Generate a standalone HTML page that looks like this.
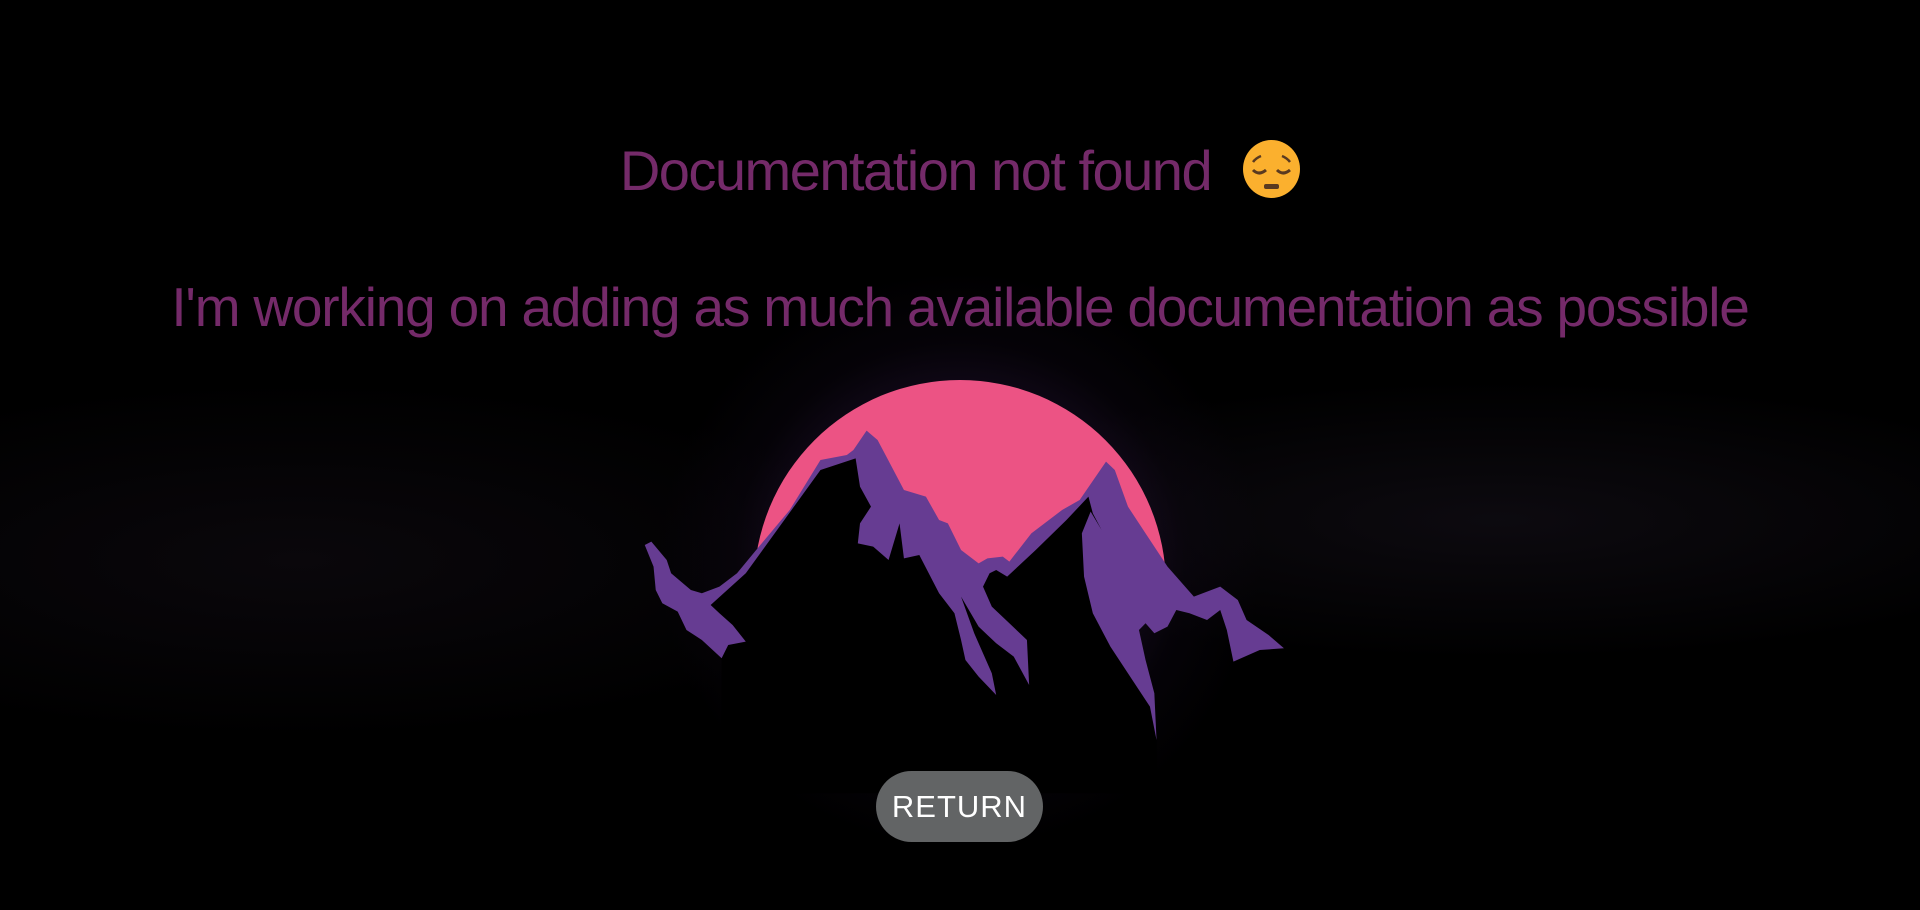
<!DOCTYPE html>
<html><head><meta charset="utf-8"><style>
html,body{margin:0;padding:0;width:1920px;height:910px;overflow:hidden;background:#000;}
body{position:relative;font-family:"Liberation Sans",sans-serif;}
.bg{position:absolute;inset:0;background:
radial-gradient(ellipse 300px 290px at 960px 560px, rgba(75,40,105,.75) 0%, rgba(45,22,65,.55) 45%, rgba(20,10,30,.25) 75%, rgba(0,0,0,0) 100%),
radial-gradient(ellipse 600px 140px at 1500px 520px, rgba(18,14,22,.7), rgba(0,0,0,0) 100%),
radial-gradient(ellipse 600px 180px at 300px 560px, rgba(14,10,16,.7), rgba(0,0,0,0) 100%);}
.t{position:absolute;left:0;width:1920px;text-align:center;color:#742a69;font-weight:300;white-space:nowrap;}
#h1{top:138px;font-size:56px;letter-spacing:-1.5px;}
#h2{top:275px;font-size:55px;letter-spacing:-1.2px;}
.emo{display:inline-block;width:57px;height:58px;border-radius:50%;background:#fbb02e;vertical-align:-8px;margin-left:18px;position:relative;}
.btn{position:absolute;left:876px;top:771px;width:167px;height:71px;border-radius:36px;background:#626465;color:#fff;font-size:31px;text-align:center;line-height:71px;letter-spacing:1px;}
</style></head><body>
<div class="bg"></div>
<div class="t" id="h1">Documentation not found <span class="emo"><svg width="57" height="58" viewBox="0 0 57 58" style="position:absolute;left:0;top:0"><path d="M10 22 q3-4 8-6 M47 22 q-3-4-8-6" stroke="#5a3a20" stroke-width="2.5" fill="none"/><path d="M10 30 q6 6 13 0 M34 30 q6 6 13 0" stroke="#5a3a20" stroke-width="3" fill="none"/><rect x="21" y="44" width="15" height="5" rx="2" fill="#5a3a20"/></svg></span></div>
<div class="t" id="h2">I'm working on adding as much available documentation as possible</div>
<svg width="1920" height="910" style="position:absolute;left:0;top:0">
<defs><clipPath id="c"><rect x="0" y="0" width="1920" height="600"/></clipPath></defs>
<circle cx="960" cy="586" r="206" fill="#ec5384" clip-path="url(#c)"/>
<g transform="translate(614,360) scale(0.4393,0.3333)">
<path fill="#663c92" d="M70 555 L85 545 L120 600 L130 640 L175 690 L200 700 L240 680 L280 640 L330 560 L400 450 L470 300 L530 285 L545 270 L575 212 L600 240 L660 390 L710 410 L740 480 L760 490 L790 570 L830 610 L850 595 L885 590 L900 605 L950 520 L1020 450 L1060 420 L1120 305 L1140 330 L1170 440 L1220 540 L1260 620 L1320 710 L1380 680 L1420 720 L1440 780 L1490 825 L1525 865 L1470 870 L1410 905 L1395 810 L1380 750 L1350 780 L1310 760 L1280 750 L1260 800 L1230 820 L1210 790 L1195 810 L1210 900 L1230 1000 L1235 1140 L870 1010 L245 895 L200 840 L165 810 L145 755 L110 730 L95 690 L90 620 Z"/>
<path fill="#000" d="M220 735 L300 640 L470 330 L550 295 L560 380 L585 440 L560 490 L555 550 L590 560 L625 600 L650 490 L660 595 L695 585 L740 700 L775 760 L790 840 L800 900 L830 950 L870 1005 L860 940 L820 820 L790 710 L830 800 L870 850 L910 890 L945 975 L940 840 L900 790 L860 740 L840 680 L855 640 L870 630 L895 650 L960 570 L1030 480 L1080 410 L1090 460 L1110 510 L1085 455 L1065 520 L1070 650 L1090 760 L1130 860 L1180 960 L1220 1040 L1235 1140 L1235 1300 L245 1300 L245 895 L260 855 L300 845 L270 795 L240 760 Z"/>
</g>
</svg>
<div class="btn">RETURN</div>
</body></html>
